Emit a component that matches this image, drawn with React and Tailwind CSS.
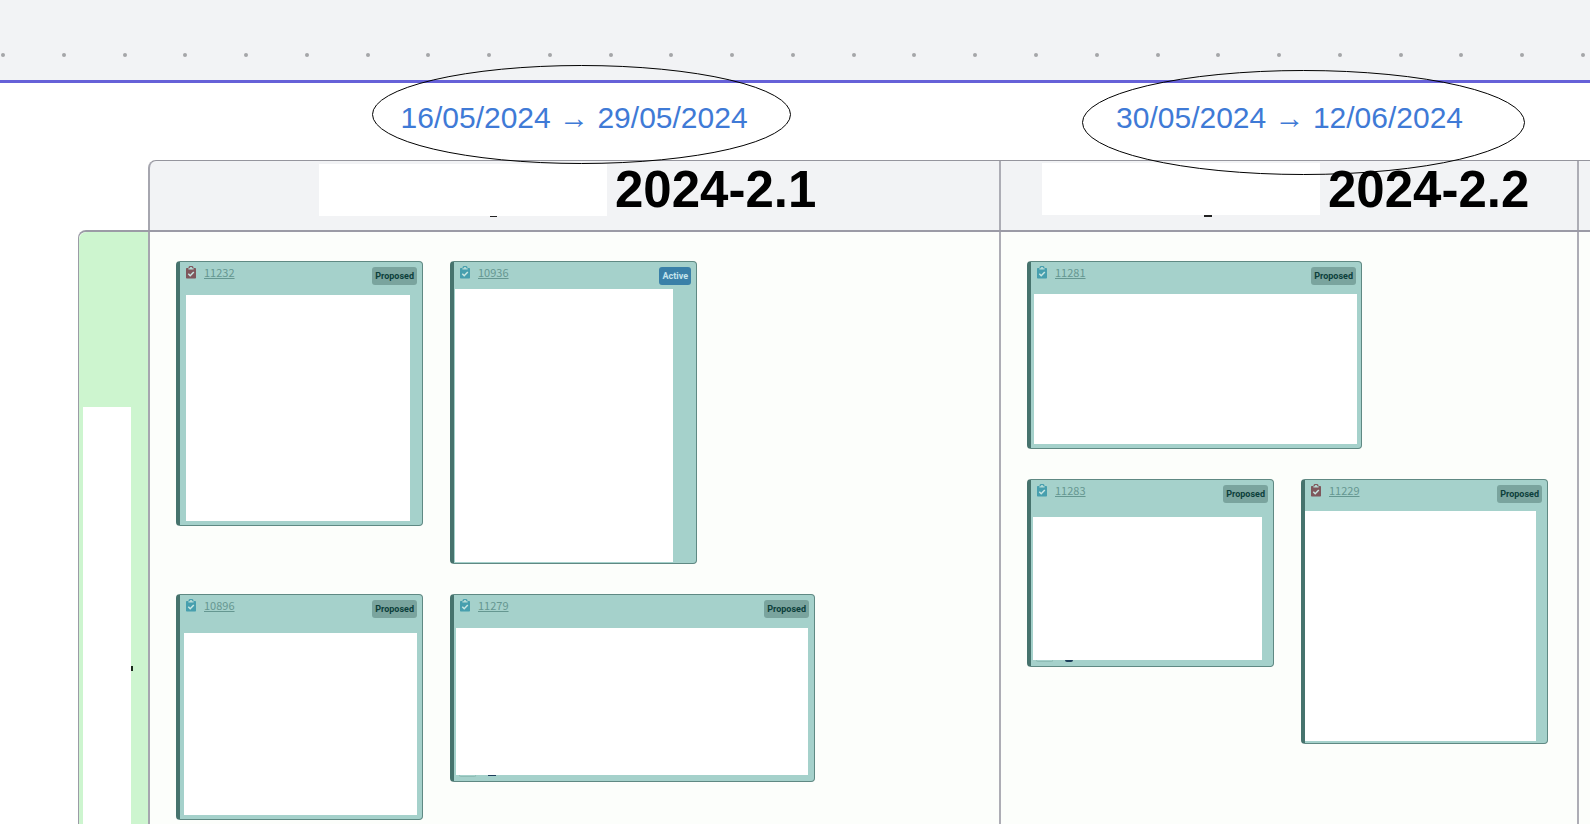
const columns = [
  {
    title: '2024-2.1',
    dates: ['16/05/2024', '29/05/2024'],
    ellipse: { rx: 209, ry: 49, className: '-left-[29px] -top-[35px]' },
    titlePad: 'pl-[169px] gap-2',
    mask: 'w-[288px] mt-[3px]',
    tick: 'left-[171px] w-[7px] h-px',
    rows: [
      [
        { id: '11232', state: 'Proposed', icon: 'bug', size: 'w-[247px] h-[265px]', body: 'mt-[9px] ml-[6px] mr-3 mb-1' },
        { id: '10936', state: 'Active', icon: 'task', size: 'w-[247px] h-[303px]', body: 'mt-[3px] ml-[1px] mr-[23px] mb-[1px]' },
      ],
      [
        { id: '10896', state: 'Proposed', icon: 'task', size: 'w-[247px] h-[226px]', body: 'mt-[14px] ml-1 mr-[5px] mb-1' },
        { id: '11279', state: 'Proposed', icon: 'task', size: 'w-[365px] h-[188px]', body: 'mt-[9px] ml-[2px] mr-[6px] mb-[6px]', mark: 'left-8 w-2 h-px' },
      ],
    ],
  },
  {
    title: '2024-2.2',
    dates: ['30/05/2024', '12/06/2024'],
    ellipse: { rx: 221, ry: 52, className: '-left-[34px] -top-[30px]' },
    titlePad: 'pl-[41px] gap-2',
    mask: 'w-[278px] mt-[2px]',
    tick: 'left-[162px] w-2 h-[2px]',
    rows: [
      [
        { id: '11281', state: 'Proposed', icon: 'task', size: 'w-[335px] h-[188px]', body: 'mt-2 ml-[3px] mr-1 mb-1' },
      ],
      [
        { id: '11283', state: 'Proposed', icon: 'task', size: 'w-[247px] h-[188px]', body: 'mt-[13px] ml-[2px] mr-[11px] mb-[6px]', mark: 'left-8 w-2 h-[2px] rounded-b' },
        { id: '11229', state: 'Proposed', icon: 'bug', size: 'w-[247px] h-[265px]', body: 'mt-[7px] mr-[11px] mb-[2px]' },
      ],
    ],
  },
];

const gridCols = 'grid grid-cols-[851fr_578fr_11fr]';

function ClipboardIcon({ type }) {
  const color = type === 'bug' ? '#7f575c' : '#479fae';
  return (
    <svg width="10" height="13" viewBox="0 0 10 13" aria-hidden="true">
      <path d="M0.8 2h1.6a2.6 2.2 0 0 1 5.2 0h1.6q.8 0 .8.8v9q0 .8-.8.8H.8q-.8 0-.8-.8v-9Q0 2 .8 2z" fill={color} />
      <path d="M2.4 3.5V2.3h1.3a1.3 1.3 0 0 1 2.6 0h1.3v1.2z" fill="#b5dbd6" />
      <path d="M2.3 7.8l1.9 1.9 3.6-3.8" fill="none" stroke="#c8e6e2" strokeWidth="1.5" />
    </svg>
  );
}

function Card({ card }) {
  return (
    <article
      className={`flex flex-col shrink-0 bg-[#a5d1cb] border border-l-4 border-[#5f8983] border-l-[#46736d] rounded ${card.size}`}
    >
      <header className="flex items-start h-6 pt-1 pl-[6px] pr-[5px]">
        <ClipboardIcon type={card.icon} />
        <a
          href={`#${card.id}`}
          className="ml-2 text-[11px] leading-3 text-[#659791] underline font-['Noto_Sans_CJK_SC',sans-serif]"
        >
          {card.id}
        </a>
        <span
          className={`ml-auto mt-px h-[18px] px-[3px] rounded-[3px] text-[9px] leading-[18px] font-bold font-[Roboto,sans-serif] ${
            card.state === 'Active' ? 'bg-[#3a80a8] text-[#c5e4ec]' : 'bg-[#7aa49e] text-[#0c3f3b]'
          }`}
        >
          {card.state}
        </span>
      </header>
      <div className={`relative flex-1 bg-white ${card.body}`}>
        {card.mark && (
          <>
            <span className="absolute top-full left-[3px] w-[17px] h-[2px] border border-t-0 border-[#8fbdb6] rounded-b" />
            <span className={`absolute top-full bg-[#1d3f5c] ${card.mark}`} />
          </>
        )}
      </div>
    </article>
  );
}

function DateRange({ column }) {
  const { rx, ry, className } = column.ellipse;
  return (
    <div className="flex justify-center items-start pt-[17px]">
      <p className="relative text-[30px] leading-9 text-[#3f7ad6] whitespace-nowrap">
        {column.dates[0]} → {column.dates[1]}
        <svg
          className={`absolute z-10 max-w-none ${className}`}
          width={rx * 2 + 1}
          height={ry * 2 + 1}
          aria-hidden="true"
        >
          <ellipse cx={rx + 0.5} cy={ry + 0.5} rx={rx} ry={ry} fill="none" stroke="#000" />
        </svg>
      </p>
    </div>
  );
}

export default function App() {
  return (
    <div className="min-h-screen flex flex-col overflow-hidden bg-white font-['Liberation_Sans',sans-serif]">
      {/* Canvas strip with the dot grid */}
      <div className="h-[83px] flex items-start justify-between pt-[53px] pl-px pr-[5px] bg-[#f2f3f5] border-b-[3px] border-[#6661d8]">
        {Array.from({ length: 27 }, (_, i) => (
          <span key={i} className="size-1 rounded-full bg-[#a5a6a8]" />
        ))}
      </div>

      {/* Sprint dates */}
      <div className={`${gridCols} h-[77px] ml-[148px]`}>
        {columns.map(column => (
          <DateRange key={column.title} column={column} />
        ))}
      </div>

      {/* Sprint names */}
      <div className={`${gridCols} h-[70px] ml-[148px] bg-[#f2f3f5] border-l-2 border-t border-[#a6a6af] border-t-[#95959d] rounded-tl-lg`}>
        {columns.map(column => (
          <div key={column.title} className={`flex items-start border-r-2 border-[#adadb5] ${column.titlePad}`}>
            <div className={`relative h-[52px] shrink-0 bg-white ${column.mask}`}>
              <span className={`absolute top-full bg-[#222] ${column.tick}`} />
            </div>
            <h2 className="text-[51px] leading-[58px] font-bold text-black whitespace-nowrap">{column.title}</h2>
          </div>
        ))}
        <div />
      </div>

      {/* Swimlane */}
      <div className="flex-1 flex ml-[78px] border-t-2 border-l border-[#9b9ba6] rounded-tl-lg bg-[#fcfefb]">
        <div className="w-[69px] shrink-0 flex flex-col pt-[175px] pl-1 bg-[#cdf5cf] rounded-tl-lg">
          <div className="relative w-12 flex-1 bg-white">
            <span className="absolute left-full top-[259px] w-[2px] h-[5px] bg-[#1b2b1c]" />
          </div>
        </div>
        <div className={`${gridCols} flex-1 border-l-2 border-[#a6a6af]`}>
          {columns.map(column => (
            <div key={column.title} className="flex flex-col gap-[30px] pt-[29px] pl-[26px] border-r-2 border-[#adadb5]">
              {column.rows.map((row, i) => (
                <div key={i} className="flex items-start gap-[27px]">
                  {row.map(card => (
                    <Card key={card.id} card={card} />
                  ))}
                </div>
              ))}
            </div>
          ))}
          <div />
        </div>
      </div>
    </div>
  );
}
